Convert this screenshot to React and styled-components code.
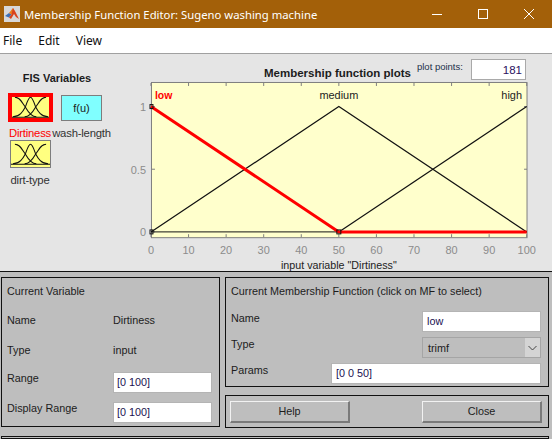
import React from 'react';
import styled, { createGlobalStyle } from 'styled-components';

const GlobalStyle = createGlobalStyle`
  html, body {
    margin: 0;
    padding: 0;
    background: #bebebe;
  }
  * {
    box-sizing: border-box;
  }
`;

const Win = styled.div`
  width: 552px;
  height: 439px;
  overflow: hidden;
  display: flex;
  flex-direction: column;
  font-family: "Liberation Sans", Arial, sans-serif;
  font-size: 10.8px;
  color: #1c1c1c;
`;

const TitleBar = styled.div`
  height: 28px;
  background: #a36009;
  color: #fff;
  display: flex;
  align-items: center;
  padding-left: 4px;
  font-family: "Noto Sans", sans-serif;
  font-size: 11.3px;
`;

const TitleText = styled.span`
  margin-left: 4px;
  flex: 1;
`;

const WinButton = styled.div`
  width: 46px;
  height: 28px;
  display: flex;
  align-items: center;
  justify-content: center;
`;

const MenuBar = styled.div`
  height: 26px;
  background: #fff;
  border-bottom: 1px solid #a0a0a0;
  display: flex;
  align-items: center;
  padding-left: 3px;
  gap: 16px;
  font-family: "Noto Sans", sans-serif;
  font-size: 12px;
  color: #111;
`;

const Top = styled.div`
  height: 218px;
  background: #e5e5e5;
  border-bottom: 1px solid #111;
  display: flex;
`;

const FisColumn = styled.div`
  width: 125px;
  padding: 18px 0 0 7px;
`;

const FisTitle = styled.div`
  font-weight: bold;
  font-size: 11px;
  width: 100px;
  text-align: center;
  margin-bottom: 9px;
`;

const FisGrid = styled.div`
  display: grid;
  grid-template-columns: 46px 41px;
  grid-template-rows: 32px 15px 33px 14px;
  column-gap: 8px;
`;

const VarBox = styled.div`
  border: ${p => (p.$selected ? '4px solid #ff0000' : '1px solid #7d7d7d')};
  background: ${p => (p.$output ? '#80ffff' : '#ffff80')};
  width: ${p => (p.$selected ? '45px' : '41px')};
  height: ${p => (p.$selected ? '29px' : p.$output ? '26px' : '28px')};
  justify-self: ${p => (p.$output ? 'start' : 'center')};
  margin-top: ${p => (p.$output ? '2px' : '0')};
  display: flex;
  align-items: center;
  justify-content: center;
  font-size: 11px;
  overflow: hidden;
`;

const VarLabel = styled.div`
  font-size: 11.3px;
  white-space: nowrap;
  display: flex;
  justify-content: center;
  align-items: center;
  color: ${p => (p.$selected ? '#ff0000' : '#333')};
  letter-spacing: -0.2px;
`;

const ChartColumn = styled.div`
  flex: 1;
  display: flex;
  flex-direction: column;
`;

const ChartHeader = styled.div`
  height: 26px;
  display: flex;
  padding: 5px 26px 0 139px;
`;

const ChartTitle = styled.div`
  font-weight: bold;
  font-size: 11.5px;
  margin-top: 8px;
  white-space: nowrap;
`;

const PointsLabel = styled.div`
  font-size: 9.5px;
  margin-left: 6px;
  margin-top: 2px;
  white-space: nowrap;
  color: #23304a;
`;

const PointsInput = styled.div`
  width: 55px;
  height: 21px;
  margin-left: auto;
  background: #fff;
  border: 1px solid #a9a9a9;
  text-align: right;
  padding: 4px 3px 0 0;
  font-size: 11.5px;
  color: #2a1060;
`;

const Bottom = styled.div`
  flex: 1;
  display: grid;
  grid-template-columns: 219px 324px;
  grid-template-rows: 110px 33px 1fr;
  column-gap: 5px;
  row-gap: 8px;
  padding: 5px 0 0 1px;
`;

const Panel = styled.div`
  border: 1px solid #111;
  grid-row: ${p => p.$rows || 'auto'};
`;

const VariablePanel = styled(Panel)`
  padding: 6px 7px 0 5px;
  margin-bottom: 1px;
  display: flex;
  flex-direction: column;
`;

const McfPanel = styled(Panel)`
  padding: 6px 7px 0 5px;
  display: flex;
  flex-direction: column;
`;

const ButtonPanel = styled(Panel)`
  display: flex;
  justify-content: space-between;
  align-items: center;
  padding: 0 6px 0 4px;
`;

const StatusPanel = styled(Panel)`
  grid-column: 1 / 3;
`;

const PanelHead = styled.div`
  height: 15px;
  line-height: 15px;
  white-space: nowrap;
`;

const Row = styled.div`
  display: flex;
  align-items: center;
  height: ${p => p.$h}px;
  margin-top: ${p => p.$top || 0}px;
`;

const RowLabel = styled.div`
  width: ${p => p.$w}px;
  flex: none;
  margin-top: ${p => (p.$up ? `-${p.$up}px` : 0)};
`;

const Field = styled.div`
  background: #fff;
  border: 1px solid #b4b4b4;
  height: 21px;
  line-height: 19px;
  padding-left: ${p => p.$pad || 4}px;
  width: ${p => p.$w}px;
  color: #1a1050;
`;

const Select = styled.div`
  height: 21px;
  width: 120px;
  border: 1px solid #a5a5a5;
  background: #bebebe;
  display: flex;
  align-items: center;
  justify-content: space-between;
  padding-left: 5px;
`;

const SelectArrow = styled.div`
  width: 15px;
  height: 19px;
  background: #d4d4d4;
  display: flex;
  align-items: center;
  justify-content: center;
`;

const Button = styled.div`
  width: 120px;
  height: 22px;
  background: #bebebe;
  border-top: 1px solid #f2f2f2;
  border-left: 1px solid #f2f2f2;
  border-right: 2px solid #7a7a7a;
  border-bottom: 2px solid #7a7a7a;
  display: flex;
  align-items: center;
  justify-content: center;
`;

function MatlabIcon() {
  return (
    <svg width="16" height="16" viewBox="0 0 16 16">
      <rect width="16" height="16" fill="#d8d8d8" />
      <path d="M1 10 L5 7 L7.5 8.5 L5 11.5 Z" fill="#3a6fb5" />
      <path d="M5 7 L9 2 L11 6 L7.5 8.5 Z" fill="#e87a1d" />
      <path d="M9 2 L11.5 6 L15 13 L12 11 L10 8 L7 13 L5 11.5 L7.5 8.5 Z" fill="#d9431e" />
    </svg>
  );
}

function MfGlyph() {
  return (
    <svg width="39" height="23" viewBox="0 0 40 23" fill="none" stroke="#111" strokeWidth="1.1" style={{ flex: 'none' }}>
      <path d="M2 21 C9 21 12 16 14.7 11 C16.5 6 18 1 20 1 C22 1 23.5 6 25.3 11 C28 16 31 21 38 21" />
      <path d="M4 1 C9 1 11 6 14.7 11 C17 15 20 21 26 21" />
      <path d="M36 1 C31 1 29 6 25.3 11 C23 15 20 21 14 21" />
      <path d="M0 21.5 L40 21.5" />
    </svg>
  );
}

function Chart() {
  const xAt = v => 150 + v * 3.777;
  const yAt = v => 232.7 - v * 126;
  const ticks = [0, 10, 20, 30, 40, 50, 60, 70, 80, 90, 100];
  return (
    <svg width="427" height="192" viewBox="125 80 427 192" fontFamily="Liberation Sans, Arial, sans-serif" fontSize="11">
      <rect x="150.5" y="82.5" width="377.5" height="156" fill="#ffffcc" stroke="#7f7f7f" />
      {ticks.map(t => (
        <g key={t} stroke="#7f7f7f">
          <line x1={xAt(t)} x2={xAt(t)} y1="83" y2="86" />
          <line x1={xAt(t)} x2={xAt(t)} y1="235" y2="238" />
        </g>
      ))}
      {[0, 0.5, 1].map(t => (
        <g key={t} stroke="#7f7f7f">
          <line x1="151" x2="154" y1={yAt(t)} y2={yAt(t)} />
          <line x1="525" x2="528" y1={yAt(t)} y2={yAt(t)} />
        </g>
      ))}
      <line x1={xAt(0)} x2={xAt(100)} y1={yAt(0)} y2={yAt(0)} stroke="#111" strokeWidth="1" />
      <path d={`M${xAt(0)} ${yAt(0)} L${xAt(50)} ${yAt(1)} L${xAt(100)} ${yAt(0)}`} fill="none" stroke="#111" strokeWidth="1.2" />
      <path d={`M${xAt(50)} ${yAt(0)} L${xAt(100)} ${yAt(1)}`} fill="none" stroke="#111" strokeWidth="1.2" />
      <path d={`M${xAt(0)} ${yAt(1)} L${xAt(50)} ${yAt(0)} L${xAt(100)} ${yAt(0)}`} fill="none" stroke="#ff0000" strokeWidth="3" />
      <rect x={xAt(0) - 1} y={yAt(1) - 2} width="3" height="4" fill="none" stroke="#111" />
      <rect x={xAt(0) - 1} y={yAt(0) - 2} width="3" height="4" fill="none" stroke="#111" />
      <rect x={xAt(50) - 2} y={yAt(0) - 2} width="4" height="4" fill="none" stroke="#111" />
      <text x="154" y="99" fill="#ff0000" fontWeight="bold" fontSize="10.5">low</text>
      <text x={xAt(50)} y="99" textAnchor="middle" fill="#222">medium</text>
      <text x="523" y="99" textAnchor="end" fill="#222">high</text>
      {ticks.map(t => (
        <text key={t} x={xAt(t)} y="255" textAnchor="middle" fill="#8c8c8c">{t}</text>
      ))}
      <text x="145" y="111" textAnchor="end" fill="#8c8c8c">1</text>
      <text x="145" y="174" textAnchor="end" fill="#8c8c8c">0.5</text>
      <text x="145" y="237" textAnchor="end" fill="#8c8c8c">0</text>
      <text x={xAt(50)} y="270" textAnchor="middle" fill="#222" fontSize="10.75">input variable "Dirtiness"</text>
    </svg>
  );
}

export default function App() {
  return (
    <Win>
      <GlobalStyle />
      <TitleBar>
        <MatlabIcon />
        <TitleText>Membership Function Editor: Sugeno washing machine</TitleText>
        <WinButton>
          <svg width="10" height="10"><path d="M0 5.5H10" stroke="#fff" /></svg>
        </WinButton>
        <WinButton>
          <svg width="10" height="10"><rect x=".5" y=".5" width="9" height="9" fill="none" stroke="#fff" /></svg>
        </WinButton>
        <WinButton>
          <svg width="10" height="10"><path d="M0 0L10 10M10 0L0 10" stroke="#fff" /></svg>
        </WinButton>
      </TitleBar>
      <MenuBar>
        <span>File</span>
        <span>Edit</span>
        <span>View</span>
      </MenuBar>
      <Top>
        <FisColumn>
          <FisTitle>FIS Variables</FisTitle>
          <FisGrid>
            <VarBox $selected><MfGlyph /></VarBox>
            <VarBox $output>f(u)</VarBox>
            <VarLabel $selected>Dirtiness</VarLabel>
            <VarLabel>wash-length</VarLabel>
            <VarBox><MfGlyph /></VarBox>
            <span />
            <VarLabel>dirt-type</VarLabel>
          </FisGrid>
        </FisColumn>
        <ChartColumn>
          <ChartHeader>
            <ChartTitle>Membership function plots</ChartTitle>
            <PointsLabel>plot points:</PointsLabel>
            <PointsInput>181</PointsInput>
          </ChartHeader>
          <Chart />
        </ChartColumn>
      </Top>
      <Bottom>
        <VariablePanel $rows="1 / 3">
          <PanelHead>Current Variable</PanelHead>
          <Row $h="15" $top="13"><RowLabel $w="106">Name</RowLabel>Dirtiness</Row>
          <Row $h="15" $top="15"><RowLabel $w="106">Type</RowLabel>input</Row>
          <Row $h="21" $top="15"><RowLabel $w="106" $up="9">Range</RowLabel><Field $w="99" $pad="3">[0 100]</Field></Row>
          <Row $h="21" $top="9"><RowLabel $w="106" $up="9">Display Range</RowLabel><Field $w="99" $pad="3">[0 100]</Field></Row>
        </VariablePanel>
        <McfPanel>
          <PanelHead>Current Membership Function (click on MF to select)</PanelHead>
          <Row $h="20" $top="12"><RowLabel $w="191" $up="7">Name</RowLabel><Field $w="120">low</Field></Row>
          <Row $h="21" $top="6"><RowLabel $w="191" $up="8">Type</RowLabel>
            <Select>trimf
              <SelectArrow>
                <svg width="9" height="6" viewBox="0 0 9 6"><path d="M.5 1L4.5 5L8.5 1" fill="none" stroke="#444" /></svg>
              </SelectArrow>
            </Select>
          </Row>
          <Row $h="21" $top="5"><RowLabel $w="100" $up="8">Params</RowLabel><Field $w="211">[0 0 50]</Field></Row>
        </McfPanel>
        <ButtonPanel>
          <Button>Help</Button>
          <Button>Close</Button>
        </ButtonPanel>
        <StatusPanel />
      </Bottom>
    </Win>
  );
}
